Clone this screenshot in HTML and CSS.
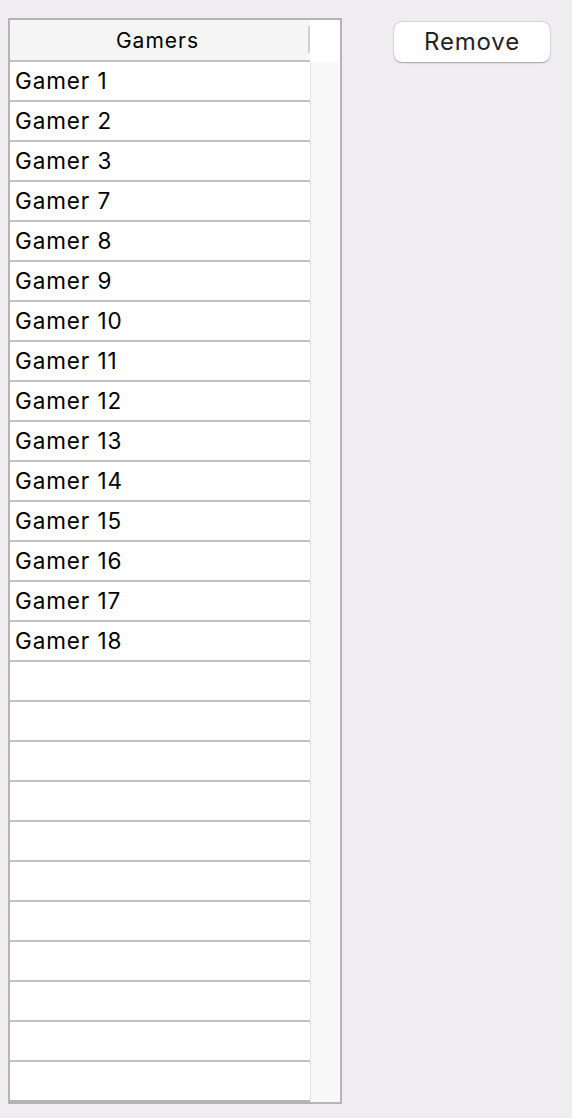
FILE: index.html
```html
<!DOCTYPE html>
<html>
<head>
<meta charset="utf-8">
<link rel="stylesheet" href="styles.css">
</head>
<body>
<div class="page">
  <div class="table">
    <div class="main">
      <div class="head"><span class="head-title">Gamers</span><span class="head-sep"></span></div>
      <div class="row">Gamer 1</div>
      <div class="row">Gamer 2</div>
      <div class="row">Gamer 3</div>
      <div class="row">Gamer 7</div>
      <div class="row">Gamer 8</div>
      <div class="row">Gamer 9</div>
      <div class="row">Gamer 10</div>
      <div class="row">Gamer 11</div>
      <div class="row">Gamer 12</div>
      <div class="row">Gamer 13</div>
      <div class="row">Gamer 14</div>
      <div class="row">Gamer 15</div>
      <div class="row">Gamer 16</div>
      <div class="row">Gamer 17</div>
      <div class="row">Gamer 18</div>
      <div class="row"></div>
      <div class="row"></div>
      <div class="row"></div>
      <div class="row"></div>
      <div class="row"></div>
      <div class="row"></div>
      <div class="row"></div>
      <div class="row"></div>
      <div class="row"></div>
      <div class="row"></div>
      <div class="row"></div>
    </div>
    <div class="side">
      <div class="side-head"></div>
      <div class="track"></div>
    </div>
  </div>
  <button class="btn">Remove</button>
</div>
</body>
</html>
```

FILE: styles.css
```css
html, body {
  margin: 0;
  padding: 0;
  background: #efedf0;
}
body {
  font-family: Inter, "Liberation Sans", sans-serif;
  color: #000;
}
.page {
  display: flex;
  align-items: flex-start;
  padding: 18px 0 0 8px;
}
.table {
  display: flex;
  border: 2px solid #b4b4b4;
  background: #fff;
}
.main {
  width: 300px;
  display: flex;
  flex-direction: column;
}
.head {
  height: 42px;
  box-sizing: border-box;
  background: #f5f5f5;
  border-bottom: 2px solid #c2c2c2;
  display: flex;
  align-items: center;
  justify-content: center;
  position: relative;
  font-size: 21px;
  letter-spacing: 1px;
}
.head-title {
  margin-right: 5px;
}
.head-sep {
  position: absolute;
  right: 0;
  top: 6px;
  width: 2px;
  height: 27px;
  background: #d2d2d2;
}
.row {
  height: 40px;
  box-sizing: border-box;
  border-bottom: 2px solid #c2c2c2;
  padding: 1px 0 0 5px;
  display: flex;
  align-items: center;
  font-size: 22.5px;
  letter-spacing: 0.9px;
  line-height: 1;
}
.row:last-child {
  border-bottom-color: #b4b4b4;
}
.side {
  width: 30px;
  display: flex;
  flex-direction: column;
}
.side-head {
  height: 42px;
  background: #fff;
}
.track {
  flex: 1;
  background: #f8f8f8;
  border-left: 1px solid #e6e6e6;
  border-right: 1px solid #fff;
}
.btn {
  margin: 4px 0 0 52px;
  width: 156px;
  height: 40px;
  border: none;
  border-radius: 8px;
  background: #fff;
  box-shadow: 0 0.5px 1.5px rgba(0,0,0,0.3), 0 0 0 0.5px rgba(0,0,0,0.08);
  font-family: Inter, "Liberation Sans", sans-serif;
  font-size: 24px;
  letter-spacing: 0.8px;
  color: #242424;
  padding: 0 0 2px 0;
}
```
